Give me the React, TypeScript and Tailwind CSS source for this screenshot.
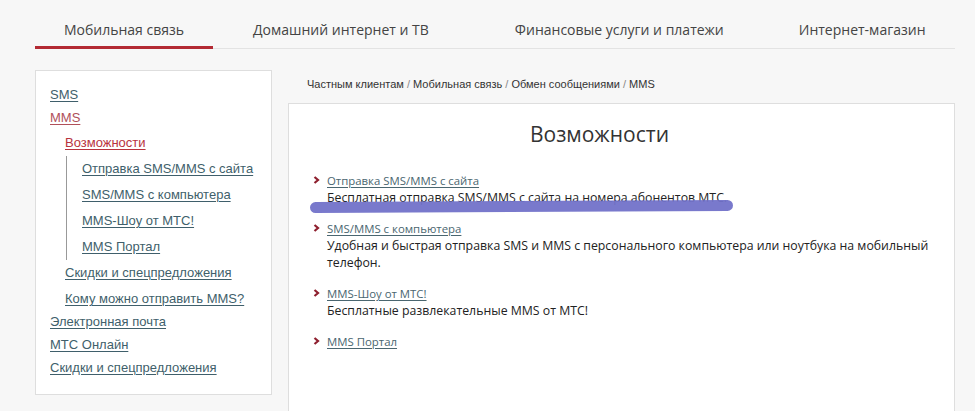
import React from "react";

type NavItem = { label: string; level: number; color?: string };

const SIDE: NavItem[] = [
  { label: "SMS", level: 0 },
  { label: "MMS", level: 0, color: "text-[#b0505a]" },
  { label: "Возможности", level: 1, color: "text-[#b8333d]" },
  { label: "Отправка SMS/MMS с сайта", level: 2 },
  { label: "SMS/MMS с компьютера", level: 2 },
  { label: "MMS-Шоу от МТС!", level: 2 },
  { label: "MMS Портал", level: 2 },
  { label: "Скидки и спецпредложения", level: 1 },
  { label: "Кому можно отправить MMS?", level: 1 },
  { label: "Электронная почта", level: 0 },
  { label: "МТС Онлайн", level: 0 },
  { label: "Скидки и спецпредложения", level: 0 },
];

const FEATURES = [
  { title: "Отправка SMS/MMS с сайта", text: "Бесплатная отправка SMS/MMS с сайта на номера абонентов МТС." },
  {
    title: "SMS/MMS с компьютера",
    text: "Удобная и быстрая отправка SMS и MMS с персонального компьютера или ноутбука на мобильный телефон.",
  },
  { title: "MMS-Шоу от МТС!", text: "Бесплатные развлекательные MMS от МТС!" },
  { title: "MMS Портал", text: "" },
];

function Chevron() {
  return (
    <svg width="7" height="8" viewBox="0 0 7 8" className="shrink-0 mt-[5px]">
      <path d="M1.5 1 L5 4 L1.5 7" fill="none" stroke="#8e1f2e" strokeWidth="2.2" />
    </svg>
  );
}

function SideLink({ item }: { item: NavItem }) {
  return (
    <a className={`underline underline-offset-2 decoration-1 ${item.color ?? "text-[#3f5f6b]"}`}>{item.label}</a>
  );
}

export default function App() {
  const top = SIDE.slice(0, 2);
  const sub = SIDE.slice(2, 3);
  const deep = SIDE.slice(3, 7);
  const subRest = SIDE.slice(7, 9);
  const bottom = SIDE.slice(9);

  return (
    <div className="h-[411px] bg-[#f7f7f7] font-['Open_Sans',sans-serif] overflow-hidden">
      {/* top menu */}
      <div className="pl-[35px] pr-[20px] pt-[19px]">
        <div className="flex border-b border-[#e3e3e3] text-[14px] text-[#444] h-[30px] whitespace-nowrap">
          <div className="w-[178px] text-center border-b-[3px] border-[#b32a33] h-[30px]">Мобильная связь</div>
          <div className="ml-[40px]">Домашний интернет и ТВ</div>
          <div className="ml-[86px]">Финансовые услуги и платежи</div>
          <div className="ml-[75px]">Интернет-магазин</div>
        </div>
      </div>

      <div className="flex pl-[35px] pt-[21px]">
        {/* sidebar */}
        <aside className="w-[237px] h-[325px] bg-white border border-[#dedede] px-[14px] pt-[12px] font-['Liberation_Sans',Arial,sans-serif] text-[13px] leading-[23px] self-start">
          {top.map((i, k) => (
            <div key={k}><SideLink item={i} /></div>
          ))}
          <div className="pl-[15px]">
            {sub.map((i, k) => (
              <div key={k} className="leading-[26px] mt-[1px]"><SideLink item={i} /></div>
            ))}
            <div className="border-l border-[#999] ml-[1px] pl-[15px] leading-[26px]">
              {deep.map((i, k) => (
                <div key={k}><SideLink item={i} /></div>
              ))}
            </div>
            {subRest.map((i, k) => (
              <div key={k} className="leading-[26px]"><SideLink item={i} /></div>
            ))}
          </div>
          <div className="-mt-[2px]">
            {bottom.map((i, k) => (
              <div key={k}><SideLink item={i} /></div>
            ))}
          </div>
        </aside>

        {/* main */}
        <main className="ml-[16px] w-[667px]">
          <div className="pl-[19px] h-[33px] pt-[6px] font-['Liberation_Sans',Arial,sans-serif] text-[11px] text-[#333]">
            Частным клиентам <span className="text-[#888]">/</span> Мобильная связь{" "}
            <span className="text-[#888]">/</span> Обмен сообщениями <span className="text-[#888]">/</span> MMS
          </div>
          <div className="relative bg-white border border-[#dedede] h-[330px] pl-[24px] pr-[20px] pt-[15px]">
            <h1 className="text-center text-[21px] text-[#333] leading-[30px] pr-[48px]">Возможности</h1>
            <div className="mt-[22px] flex flex-col gap-[13px]">
              {FEATURES.map((f, k) => (
                <div key={k} className="flex gap-[7px]">
                  <Chevron />
                  <div className="leading-[17px]">
                    <a className="text-[11.4px] text-[#4a6670] underline underline-offset-2">{f.title}</a>
                    {f.text && <p className="text-[12.3px] text-[#222]">{f.text}</p>}
                  </div>
                </div>
              ))}
            </div>
            {/* highlighter stroke */}
            <div className="absolute left-[21px] top-[97px] w-[423px] h-[11px] rounded-full bg-[#7272c9] opacity-95 -rotate-[0.3deg]" />
          </div>
        </main>
      </div>
    </div>
  );
}
